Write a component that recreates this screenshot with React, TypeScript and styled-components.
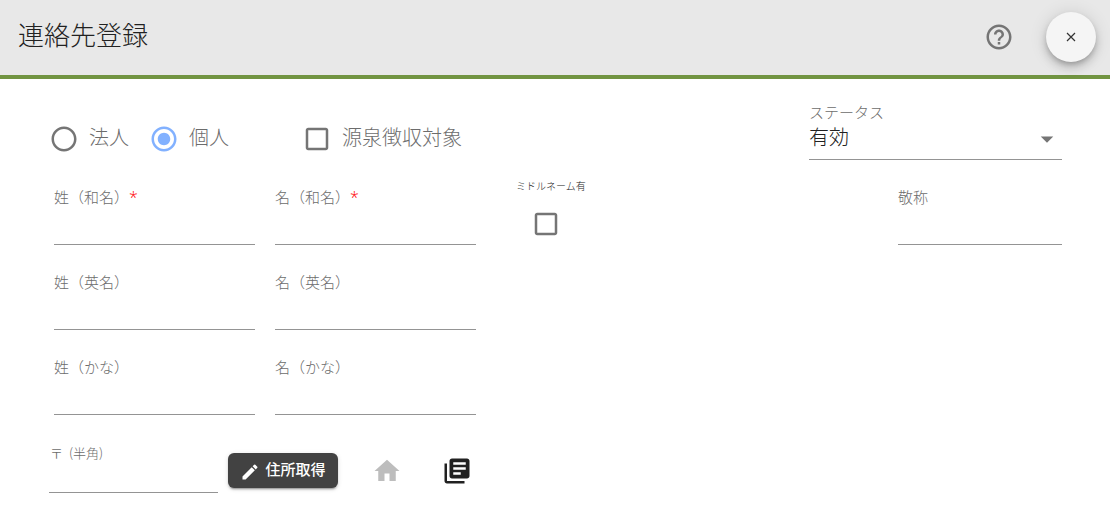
import React, { useState } from "react";
import styled, { createGlobalStyle } from "styled-components";
import {
  MdArrowDropDown,
  MdCheckBox,
  MdCheckBoxOutlineBlank,
  MdEdit,
  MdHelpOutline,
  MdHome,
  MdLibraryBooks,
  MdRadioButtonChecked,
  MdRadioButtonUnchecked,
} from "react-icons/md";

const color = {
  text: "#212121",
  muted: "#6c6c6c",
  icon: "#757575",
  line: "#949494",
  accent: "#82b1ff",
  green: "#719441",
};

const GlobalStyle = createGlobalStyle`
  *, *::before, *::after { box-sizing: border-box; }
  body {
    margin: 0;
    background: #fff;
    color: ${color.text};
    font-family: "Noto Sans CJK JP", "Noto Sans", sans-serif;
    font-weight: 300;
  }
  button, input, select { font: inherit; color: inherit; }
  svg { display: block; flex: none; }
`;

const Header = styled.header`
  display: flex;
  align-items: center;
  height: 79px;
  padding: 0 14px 2px 18px;
  background: #e8e8e8;
  border-bottom: 4px solid ${color.green};
`;

const Title = styled.h1`
  flex: 1;
  margin: 0;
  padding-bottom: 6px;
  font-size: 26px;
  line-height: 36px;
  font-weight: 300;
`;

const PlainButton = styled.button<{ $width: number; $tone: string }>`
  display: flex;
  justify-content: center;
  align-items: center;
  width: ${(p) => p.$width}px;
  height: 30px;
  padding: 0;
  border: 0;
  background: none;
  color: ${(p) => p.$tone};
  cursor: pointer;
`;

const CloseButton = styled.button`
  display: flex;
  justify-content: center;
  align-items: center;
  width: 50px;
  height: 50px;
  margin-left: 32px;
  padding: 0;
  border: 0;
  border-radius: 50%;
  background: #f5f5f5;
  box-shadow: 0 3px 5px -1px rgba(0, 0, 0, 0.2), 0 6px 10px rgba(0, 0, 0, 0.14),
    0 1px 18px rgba(0, 0, 0, 0.12);
  cursor: pointer;
`;

const Form = styled.form`
  display: flex;
  flex-direction: column;
  gap: 27px;
  padding: 23px 48px 14px 49px;
`;

const TopRow = styled.div`
  display: grid;
  grid-template-columns: minmax(0, 740fr) minmax(0, 253fr);
  gap: 20px;
  align-items: end;
`;

const Choices = styled.div`
  display: flex;
  align-items: center;
  padding-bottom: 6px;
`;

const RadioGroup = styled.div`
  display: flex;
  gap: 20px;
  margin-right: 73px;
`;

const Choice = styled.label`
  display: flex;
  align-items: center;
  gap: 10px;
  height: 30px;
  font-size: 20px;
  line-height: 30px;
  color: ${color.muted};
  white-space: nowrap;
  cursor: pointer;
`;

const ChoiceText = styled.span`
  padding-bottom: 4px;
`;

const Mark = styled.span<{ $on?: boolean }>`
  display: block;
  position: relative;
  width: 30px;
  height: 30px;
  color: ${(p) => (p.$on ? color.accent : color.icon)};

  input {
    position: absolute;
    inset: 0;
    width: 100%;
    height: 100%;
    margin: 0;
    opacity: 0;
    cursor: pointer;
  }
`;

const NameGrid = styled.div`
  display: grid;
  grid-template-columns: minmax(0, 201fr) minmax(0, 201fr) minmax(0, 382fr) minmax(0, 164fr);
  gap: 27px 20px;
  padding-left: 5px;
`;

const FieldBox = styled.div<{ $column?: number }>`
  display: flex;
  flex-direction: column;
  grid-column: ${(p) => p.$column ?? "auto"};
`;

const FieldLabel = styled.label`
  font-size: 15px;
  line-height: 20px;
  color: ${color.muted};
  white-space: nowrap;
`;

const Required = styled.span`
  color: #f00;
  font-family: "Open Sans", sans-serif;
  font-size: 16px;
  line-height: 16px;
`;

const TextInput = styled.input`
  width: 100%;
  height: 38px;
  padding: 0;
  border: 0;
  border-bottom: 1px solid ${color.line};
  border-radius: 0;
  background: none;
  font-size: 20px;
  outline: none;
`;

const SelectBox = styled.div`
  position: relative;

  svg {
    position: absolute;
    right: 0;
    top: 2px;
    color: ${color.icon};
    pointer-events: none;
  }
`;

const Select = styled.select`
  width: 100%;
  height: 38px;
  padding: 0 30px 8px 0;
  border: 0;
  border-bottom: 1px solid ${color.line};
  border-radius: 0;
  background: none;
  appearance: none;
  font-size: 20px;
  outline: none;
`;

const MiddleName = styled.label`
  display: flex;
  flex-direction: column;
  align-items: flex-start;
  gap: 17px;
  margin-top: -7px;
  padding-left: 20px;
  font-size: 10px;
  line-height: 12px;
`;

const MiddleMark = styled.span`
  padding-left: 15px;
`;

const AddressRow = styled.div`
  display: flex;
  align-items: flex-end;
  gap: 10px;
`;

const PostalBox = styled.div`
  flex: 0 1 169px;

  label {
    display: flex;
    gap: 6px;
    padding-left: 1px;
    font-size: 13px;
    line-height: 22px;
    color: ${color.muted};
  }

  input {
    display: block;
    height: 29px;
  }
`;

const Actions = styled.div`
  display: flex;
  align-items: center;
  padding-bottom: 5px;
`;

const LookupButton = styled.button`
  display: flex;
  justify-content: center;
  align-items: center;
  gap: 5px;
  width: 110px;
  height: 35px;
  margin-right: 14px;
  padding: 0;
  border: 0;
  border-radius: 6px;
  background: #424242;
  color: #fff;
  font-size: 15px;
  font-weight: 500;
  line-height: 20px;
  white-space: nowrap;
  box-shadow: 0 3px 1px -2px rgba(0, 0, 0, 0.2), 0 2px 2px rgba(0, 0, 0, 0.14),
    0 1px 5px rgba(0, 0, 0, 0.12);
  cursor: pointer;

  svg {
    margin-top: 2px;
  }
`;

const LookupText = styled.span`
  padding-bottom: 3px;
`;

type FieldProps = { id: string; label: string; required?: boolean; column?: number };

function Field({ id, label, required, column }: FieldProps) {
  return (
    <FieldBox $column={column}>
      <FieldLabel htmlFor={id}>
        {label}
        {required && <Required>*</Required>}
      </FieldLabel>
      <TextInput id={id} name={id} type="text" required={required} />
    </FieldBox>
  );
}

type CheckProps = { name: string; checked: boolean; onToggle: () => void };

function CheckMark({ name, checked, onToggle }: CheckProps) {
  return (
    <Mark $on={checked}>
      {checked ? <MdCheckBox size={30} /> : <MdCheckBoxOutlineBlank size={30} />}
      <input type="checkbox" name={name} checked={checked} onChange={onToggle} />
    </Mark>
  );
}

const kinds = [
  { value: "corporate", label: "法人" },
  { value: "individual", label: "個人" },
];

export default function App() {
  const [kind, setKind] = useState("individual");
  const [withholding, setWithholding] = useState(false);
  const [middle, setMiddle] = useState(false);

  return (
    <>
      <GlobalStyle />
      <Header>
        <Title>連絡先登録</Title>
        <PlainButton type="button" $width={30} $tone={color.icon} aria-label="ヘルプ">
          <MdHelpOutline size={30} />
        </PlainButton>
        <CloseButton type="button" aria-label="閉じる">
          <svg width="10" height="10" viewBox="0 0 10 10" fill="none" stroke="#333" strokeWidth="1.2">
            <path d="M1 1 L9 9 M9 1 L1 9" />
          </svg>
        </CloseButton>
      </Header>
      <Form onSubmit={(e) => e.preventDefault()}>
        <TopRow>
          <Choices>
            <RadioGroup role="radiogroup">
              {kinds.map((k) => (
                <Choice key={k.value}>
                  <Mark $on={kind === k.value}>
                    {kind === k.value ? (
                      <MdRadioButtonChecked size={30} />
                    ) : (
                      <MdRadioButtonUnchecked size={30} />
                    )}
                    <input
                      type="radio"
                      name="kind"
                      value={k.value}
                      checked={kind === k.value}
                      onChange={() => setKind(k.value)}
                    />
                  </Mark>
                  <ChoiceText>{k.label}</ChoiceText>
                </Choice>
              ))}
            </RadioGroup>
            <Choice>
              <CheckMark
                name="withholding"
                checked={withholding}
                onToggle={() => setWithholding(!withholding)}
              />
              <ChoiceText>源泉徴収対象</ChoiceText>
            </Choice>
          </Choices>
          <FieldBox>
            <FieldLabel htmlFor="status">ステータス</FieldLabel>
            <SelectBox>
              <Select id="status" name="status" defaultValue="active">
                <option value="active">有効</option>
                <option value="inactive">無効</option>
              </Select>
              <MdArrowDropDown size={30} />
            </SelectBox>
          </FieldBox>
        </TopRow>
        <NameGrid>
          <Field id="lastName" label="姓（和名）" required />
          <Field id="firstName" label="名（和名）" required />
          <MiddleName>
            ミドルネーム有
            <MiddleMark>
              <CheckMark name="middle" checked={middle} onToggle={() => setMiddle(!middle)} />
            </MiddleMark>
          </MiddleName>
          <Field id="honorific" label="敬称" />
          <Field id="lastNameEn" label="姓（英名）" column={1} />
          <Field id="firstNameEn" label="名（英名）" column={2} />
          <Field id="lastNameKana" label="姓（かな）" column={1} />
          <Field id="firstNameKana" label="名（かな）" column={2} />
        </NameGrid>
        <AddressRow>
          <PostalBox>
            <label htmlFor="postal">
              <span>〒</span>
              <span>(半角)</span>
            </label>
            <TextInput id="postal" name="postal" type="text" />
          </PostalBox>
          <Actions>
            <LookupButton type="button">
              <MdEdit size={20} />
              <LookupText>住所取得</LookupText>
            </LookupButton>
            <PlainButton type="button" $width={70} $tone="#bdbdbd" aria-label="自宅">
              <MdHome size={30} />
            </PlainButton>
            <PlainButton type="button" $width={70} $tone={color.text} aria-label="住所一覧">
              <MdLibraryBooks size={30} />
            </PlainButton>
          </Actions>
        </AddressRow>
      </Form>
    </>
  );
}
